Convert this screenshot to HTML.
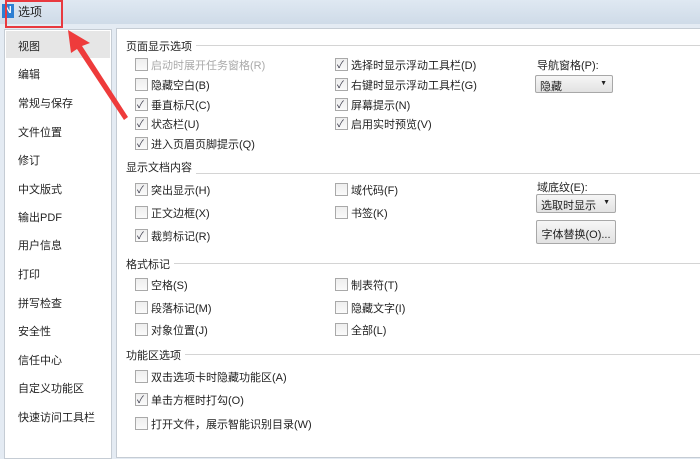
<!DOCTYPE html>
<html><head><meta charset="utf-8"><style>
*{margin:0;padding:0;box-sizing:border-box}
body{width:700px;height:450px;overflow:hidden;background:#e4ebf3;font-family:"Liberation Sans","Noto Sans CJK SC",sans-serif;font-size:11px;color:#222;position:relative}
.title{position:absolute;left:0;top:0;width:700px;height:24px;background:linear-gradient(#dfe8f2,#cfdbe8);}
.title .ic{position:absolute;left:2px;top:4px;width:12px;height:14px;background:#2d7fd3;color:#fff;font-size:10px;font-weight:bold;text-align:center;line-height:14px}
.title .t{position:absolute;left:18px;top:3px;font-size:12px}
.side{position:absolute;left:4px;top:29px;width:108px;height:430px;background:#fff;border:1px solid #c5ccd4}
.side .i{position:absolute;left:13px;font-size:11px}
.side .sel{position:absolute;left:1px;top:1px;width:104px;height:27px;background:#e6e6e6}
.main{position:absolute;left:116px;top:28px;width:590px;height:430px;background:#fff;border:1px solid #c5ccd4}
.h{position:absolute;left:9px;font-size:11px;background:#fff;padding-right:4px}
.hl{position:absolute;left:9px;right:0;height:1px;background:#d4d4d4}
.c{position:absolute;font-size:11px;white-space:nowrap;padding-left:16px}
.c:before{content:"";position:absolute;left:0;top:1px;width:11px;height:11px;border:1px solid #a9a9a9;background:linear-gradient(#eee,#fafafa)}
.c.k:after{content:"✓";position:absolute;left:2px;top:-1px;font-size:10px;color:#334}
.c.d{color:#aaa}
.lb{position:absolute;font-size:11px}
.dd,.bt{position:absolute;border:1px solid #a8a8a8;border-radius:2px;background:linear-gradient(#f6f6f6,#e2e2e2);font-size:11px;padding:2px 4px}
.dd:after{content:"▼";position:absolute;right:5px;top:4px;font-size:7px}
</style></head><body>
<div class="title"><div class="ic">N</div><div class="t">选项</div></div>
<div class="side">
<div class="sel"></div>
<div class="i" style="top:8px">视图</div>
<div class="i" style="top:36px">编辑</div>
<div class="i" style="top:65px">常规与保存</div>
<div class="i" style="top:94px">文件位置</div>
<div class="i" style="top:122px">修订</div>
<div class="i" style="top:151px">中文版式</div>
<div class="i" style="top:179px">输出PDF</div>
<div class="i" style="top:207px">用户信息</div>
<div class="i" style="top:236px">打印</div>
<div class="i" style="top:265px">拼写检查</div>
<div class="i" style="top:293px">安全性</div>
<div class="i" style="top:322px">信任中心</div>
<div class="i" style="top:350px">自定义功能区</div>
<div class="i" style="top:379px">快速访问工具栏</div>
</div>
<div class="main">
<div class="hl" style="top:16px"></div><div class="h" style="top:9px">页面显示选项</div>
<div class="c d" style="left:18px;top:28px">启动时展开任务窗格(R)</div>
<div class="c" style="left:18px;top:48px">隐藏空白(B)</div>
<div class="c k" style="left:18px;top:68px">垂直标尺(C)</div>
<div class="c k" style="left:18px;top:87px">状态栏(U)</div>
<div class="c k" style="left:18px;top:107px">进入页眉页脚提示(Q)</div>
<div class="c k" style="left:218px;top:28px">选择时显示浮动工具栏(D)</div>
<div class="c k" style="left:218px;top:48px">右键时显示浮动工具栏(G)</div>
<div class="c k" style="left:218px;top:68px">屏幕提示(N)</div>
<div class="c k" style="left:218px;top:87px">启用实时预览(V)</div>
<div class="lb" style="left:420px;top:28px">导航窗格(P):</div>
<div class="dd" style="left:418px;top:46px;width:78px;height:18px">隐藏</div>

<div class="hl" style="top:144px"></div><div class="h" style="top:130px">显示文档内容</div>
<div class="c k" style="left:18px;top:153px">突出显示(H)</div>
<div class="c" style="left:18px;top:176px">正文边框(X)</div>
<div class="c k" style="left:18px;top:199px">裁剪标记(R)</div>
<div class="c" style="left:218px;top:153px">域代码(F)</div>
<div class="c" style="left:218px;top:176px">书签(K)</div>
<div class="lb" style="left:420px;top:150px">域底纹(E):</div>
<div class="dd" style="left:419px;top:165px;width:80px;height:19px">选取时显示</div>
<div class="bt" style="left:419px;top:191px;width:80px;height:24px;text-align:center;padding-top:5px">字体替换(O)...</div>

<div class="hl" style="top:234px"></div><div class="h" style="top:227px">格式标记</div>
<div class="c" style="left:18px;top:248px">空格(S)</div>
<div class="c" style="left:18px;top:271px">段落标记(M)</div>
<div class="c" style="left:18px;top:293px">对象位置(J)</div>
<div class="c" style="left:218px;top:248px">制表符(T)</div>
<div class="c" style="left:218px;top:271px">隐藏文字(I)</div>
<div class="c" style="left:218px;top:293px">全部(L)</div>

<div class="hl" style="top:325px"></div><div class="h" style="top:318px">功能区选项</div>
<div class="c" style="left:18px;top:340px">双击选项卡时隐藏功能区(A)</div>
<div class="c k" style="left:18px;top:363px">单击方框时打勾(O)</div>
<div class="c" style="left:18px;top:387px">打开文件，展示智能识别目录(W)</div>
</div>
<svg style="position:absolute;left:0;top:0" width="700" height="450">
<rect x="6" y="1" width="56" height="26" fill="none" stroke="#e8393f" stroke-width="2"/>
<polygon points="68,30 90,43 82,46 128,117 124,120 77,49 71,53" fill="#ee3b3b"/>
</svg>
</body></html>
